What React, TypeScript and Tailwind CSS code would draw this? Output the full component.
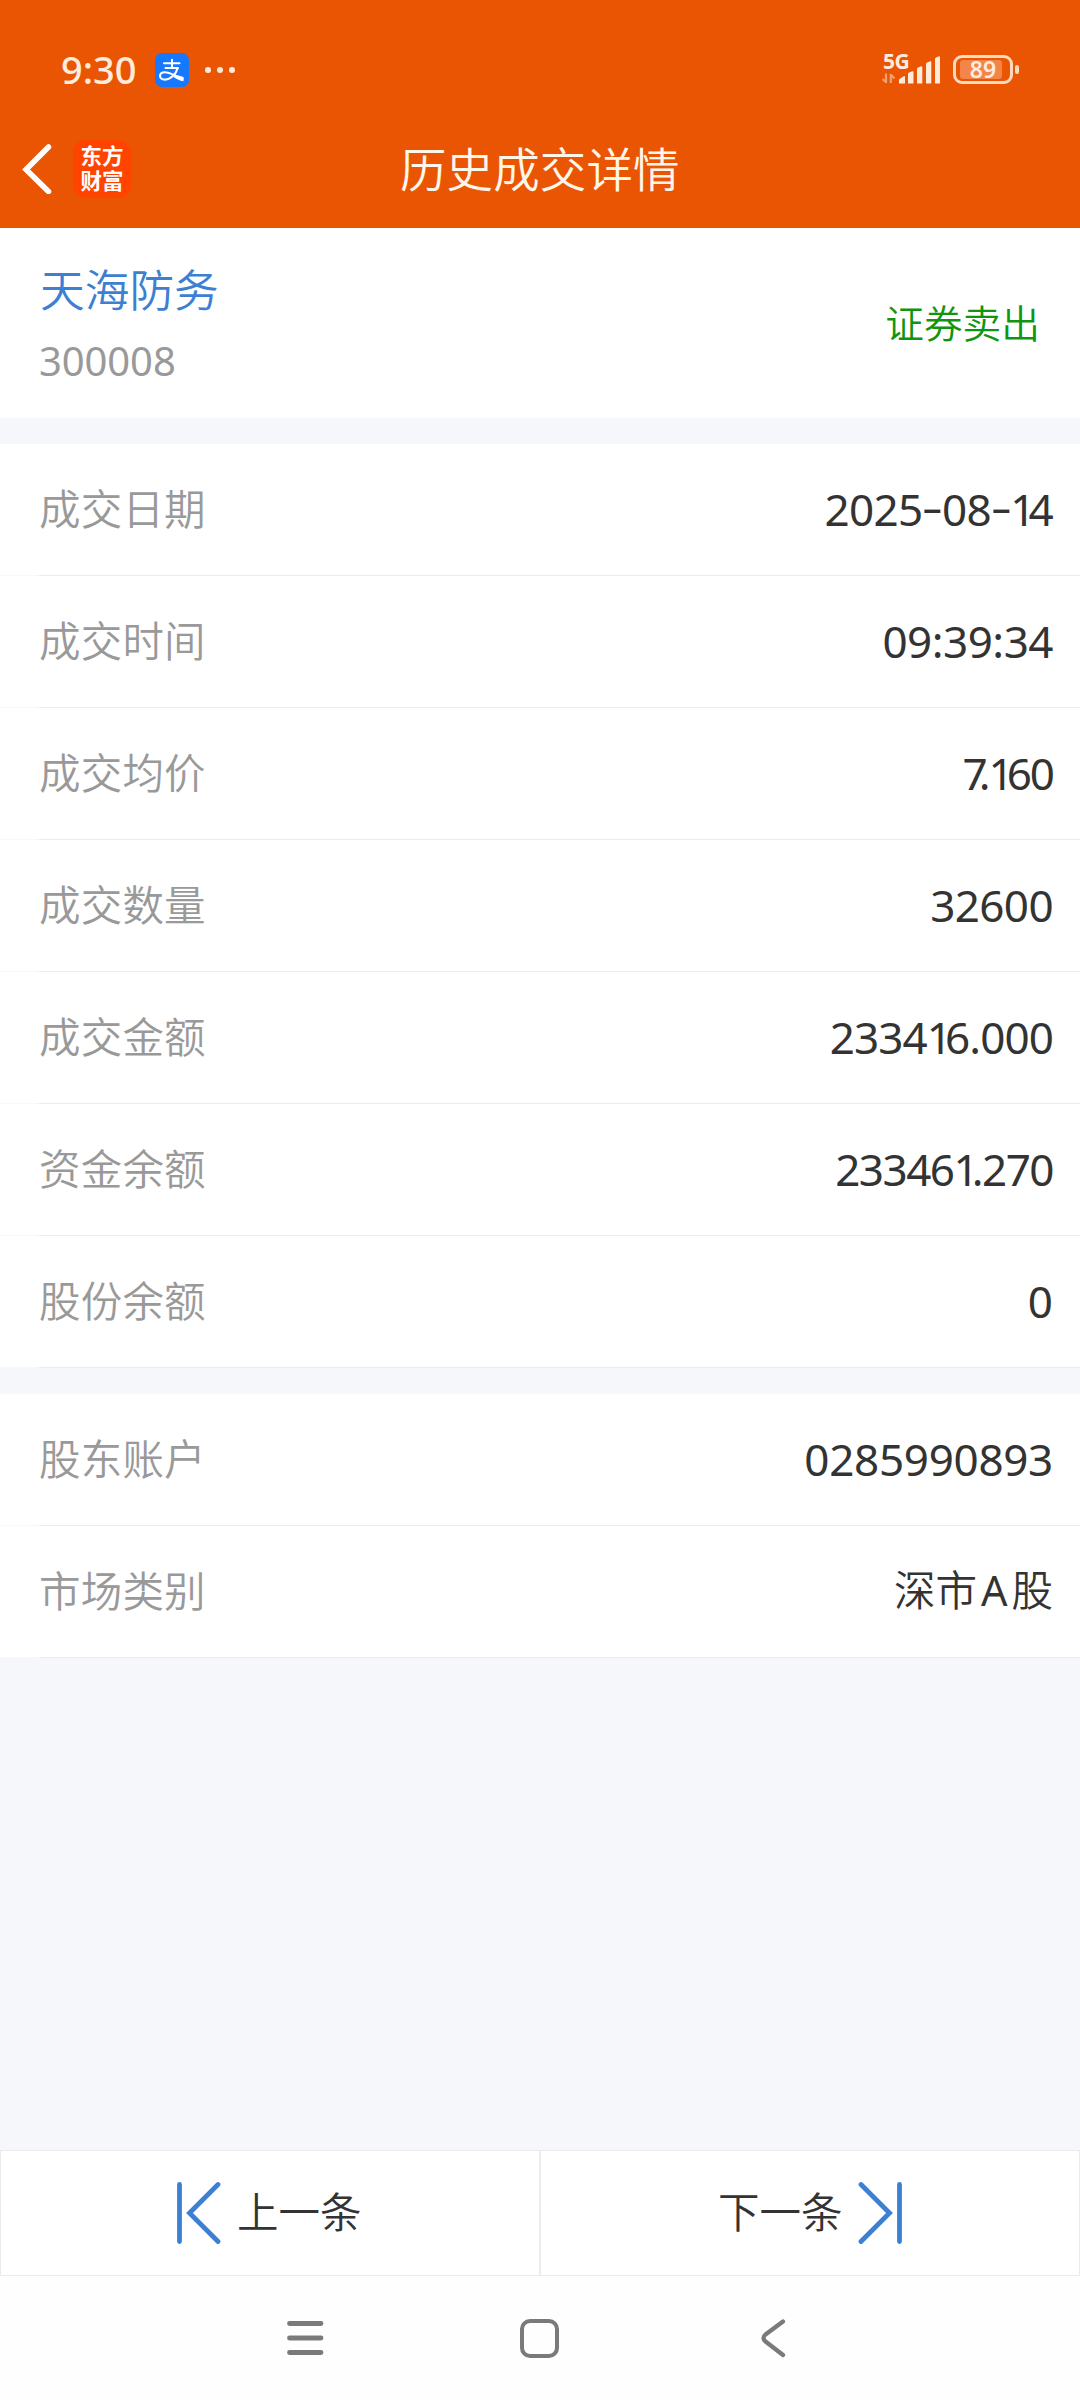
type Row = { label: string; value: string; className: string };

const tradeRows: Row[] = [
  { label: '成交日期', value: '2025-08-14', className: 'text-[44px] tracking-[-0.7px]' },
  { label: '成交时间', value: '09:39:34', className: 'text-[44px] tracking-[-0.5px]' },
  { label: '成交均价', value: '7.160', className: 'text-[44px] tracking-[-2px]' },
  { label: '成交数量', value: '32600', className: 'text-[44px] tracking-[-0.6px]' },
  { label: '成交金额', value: '233416.000', className: 'text-[44px] tracking-[-0.9px]' },
  { label: '资金余额', value: '233461.270', className: 'text-[44px] tracking-[-1.5px]' },
  { label: '股份余额', value: '0', className: 'text-[44px]' },
];

const accountRows: Row[] = [
  { label: '股东账户', value: '0285990893', className: 'text-[44px] tracking-[-0.3px]' },
  { label: '市场类别', value: '深市A股', className: 'text-[41.500px] font-[350]' },
];

const glyphSpacing: Record<string, string> = {
  '1': 'tracking-[-7px]',
  '7': 'tracking-[-9px]',
  '-': 'inline-block mx-[3px] -translate-y-[3px] scale-x-[1.5]',
  A: 'inline-block mx-[4px] font-normal',
};

function Value({ text }: { text: string }) {
  return text.split(/(7(?=\.)|[1A-])/).map((part, i) =>
    glyphSpacing[part] ? (
      <span key={i} className={glyphSpacing[part]}>
        {part}
      </span>
    ) : (
      part
    ),
  );
}

function StatusBar() {
  return (
    <div className="flex h-[110px] items-start justify-between pt-[52px] pr-[67px] pl-[61px] text-[#fdebdc]">
      <div className="flex h-[36px] items-center">
        <span className="-mt-[3px] w-[78px] text-[38px] font-medium leading-[36px]">9:30</span>
        <svg className="ml-[16px]" width="34" height="34" viewBox="0 0 34 34" fill="none">
          <rect width="34" height="34" rx="7" fill="#1677ff" />
          <g stroke="#fff" strokeLinecap="round" strokeLinejoin="round" strokeWidth="2.1">
            <path d="M9 10.2h15.5M17 6.8v7.6M10.5 15h12.2" />
            <path d="M22.7 15c-1.500 5.500-6.500 11.600-12.700 11.600-3.300 0-5-1.700-5-3.600 0-2.200 2-3.700 4.800-3.700 5.200 0 11.200 4.300 18 6.500" />
          </g>
          <path d="M20 21.500l8.500 2.500v4.200c-3.500-.6-7-2.300-10-4.300z" fill="#fff" />
        </svg>
        <span className="ml-[16px] flex gap-[6px]">
          <i className="size-[6px] rounded-full bg-[#fdebdc]" />
          <i className="size-[6px] rounded-full bg-[#fdebdc]" />
          <i className="size-[6px] rounded-full bg-[#fdebdc]" />
        </span>
      </div>
      <div className="flex h-[36px] items-center">
        <div className="relative h-[32px] w-[60px]">
          <span className="absolute -top-[2px] left-[3px] text-[21px] font-bold leading-[18px] tracking-[-0.5px]">5G</span>
          <svg className="absolute inset-0" width="60" height="32" viewBox="0 0 60 32" fill="#fdebdc">
            <path d="M19 29.500v-3q0-1 1-1.800l4-2.700q1-.3 1 .8v6.700zM28 29.500V20q0-1 1-1.500l3.500-1.300q1-.2 1 .8v11.500zM37 29.500V15q0-1 1-1.500l3.300-1.300q1-.2 1 .8v16.500zM46 29.500V10q0-1 1-1.500l3.300-1.300q1-.2 1 .8v21.500zM55 29.500V5q0-1 1-1.500l3-1.300q1-.2 1 .8v26.500z" />
            <path d="M6 19.500v9.500M6.500 28.500L2.500 25M10.800 29v-9M10.500 20.500l4 4" fill="none" stroke="#fdebdc" strokeOpacity=".5" strokeWidth="2.200" />
          </svg>
        </div>
        <div className="relative -mt-px ml-[13px] flex h-[29px] w-[60px] items-center justify-center rounded-[9px] border-[3px] border-[#fdd9bd]">
          <i className="absolute top-[2px] left-[4px] h-[19px] w-[42px] rounded-[3px] bg-[#f28547]" />
          <span className="relative text-[23px] font-semibold leading-none text-[#fdebdc]">89</span>
          <i className="absolute top-[7px] -right-[9px] h-[9px] w-[4px] rounded-full bg-[#fdd9bd]" />
        </div>
      </div>
    </div>
  );
}

function Header() {
  return (
    <div className="flex h-[118px] items-center pl-[22px]">
      <svg width="30" height="50" viewBox="0 0 30 50" fill="none" className="shrink-0">
        <path d="M26.500 3L4 25.500l22.500 22" stroke="#fff" strokeWidth="5.500" strokeLinecap="round" />
      </svg>
      <div className="ml-[21px] flex size-[58px] shrink-0 flex-col items-center justify-center rounded-[12px] bg-[#ff4400] text-[21.500px] font-bold leading-[25px] text-white">
        <span className="-mt-[2px]">东方</span>
        <span>财富</span>
      </div>
      <h1 className="ml-[269px] text-[46.500px] leading-none font-[350] tracking-[0.1px] whitespace-nowrap text-[#fff6ea]">历史成交详情</h1>
    </div>
  );
}

function Rows({ rows }: { rows: Row[] }) {
  return (
    <div className="bg-white">
      {rows.map((row) => (
        <div key={row.label} className="flex h-[132px] items-center border-b border-[#f8f8f8]">
          <div className="-mb-px ml-[39px] flex h-[132px] flex-1 items-center justify-between border-b border-[#ebebeb] pr-[27px]">
            <span className="text-[41.500px] leading-none font-[350] tracking-[0.2px] text-[#999]">{row.label}</span>
            <span className={`pb-[1px] leading-none whitespace-nowrap text-[#333] ${row.className}`}>
              <Value text={row.value} />
            </span>
          </div>
        </div>
      ))}
    </div>
  );
}

export default function App() {
  return (
    <div className="flex h-[2400px] w-[1080px] flex-col overflow-hidden bg-[#f6f7fa] font-['Noto_Sans','Noto_Sans_CJK_SC',sans-serif]">
      <header className="bg-[#ea5504]">
        <StatusBar />
        <Header />
      </header>
      <section className="flex h-[190px] items-center justify-between bg-white pr-[40px] pl-[40px]">
        <div className="flex flex-col gap-[29px] pt-[3px]">
          <span className="text-[44.700px] leading-none font-[350] text-[#3d7fd3]">天海防务</span>
          <span className="-ml-px text-[40px] leading-none tracking-[-0.1px] text-[#999]">300008</span>
        </div>
        <span className="text-[38.700px] leading-none font-[350] text-[#109510]">证券卖出</span>
      </section>
      <main className="mt-[26px] flex flex-col gap-[26px]">
        <Rows rows={tradeRows} />
        <Rows rows={accountRows} />
      </main>
      <div className="mt-auto flex h-[126px] shrink-0 bg-white text-[41.500px] font-[350] text-[#333]">
        <button className="flex w-[540px] items-center border border-[#ebebeb] pl-[174px]">
          <svg width="46" height="66" viewBox="0 0 46 66" fill="none" stroke="#3d7fd3" strokeWidth="4.800" strokeLinecap="round">
            <path d="M4.500 4.500v57M43 4.500L14.500 33L43 61.500" />
          </svg>
          <span className="ml-[16px] leading-none">上一条</span>
        </button>
        <button className="flex w-[540px] items-center border border-[#ebebeb] pl-[177px]">
          <span className="leading-none">下一条</span>
          <svg className="ml-[15px]" width="46" height="66" viewBox="0 0 46 66" fill="none" stroke="#3d7fd3" strokeWidth="4.800" strokeLinecap="round">
            <path d="M41.500 4.500v57M3 4.500L31.500 33L3 61.500" />
          </svg>
        </button>
      </div>
      <nav className="flex h-[124px] shrink-0 items-center bg-[#fefefe] pl-[285px]">
        <svg width="40" height="40" viewBox="0 0 40 40" fill="none" stroke="#7a7a7a" strokeWidth="4.800" strokeLinecap="round">
          <path d="M4.500 5.500h31.500M4.500 20h31.500M4.500 34.500h31.500" />
        </svg>
        <i className="ml-[195px] size-[39px] rounded-[10px] border-[4.500px] border-[#7a7a7a]" />
        <svg className="ml-[200px]" width="30" height="40" viewBox="0 0 30 40" fill="none" stroke="#7a7a7a" strokeWidth="4.300" strokeLinecap="round" strokeLinejoin="round">
          <path d="M24 3.500L6.500 16.500Q2.500 20 6.500 23.500L24 37" />
        </svg>
      </nav>
    </div>
  );
}
